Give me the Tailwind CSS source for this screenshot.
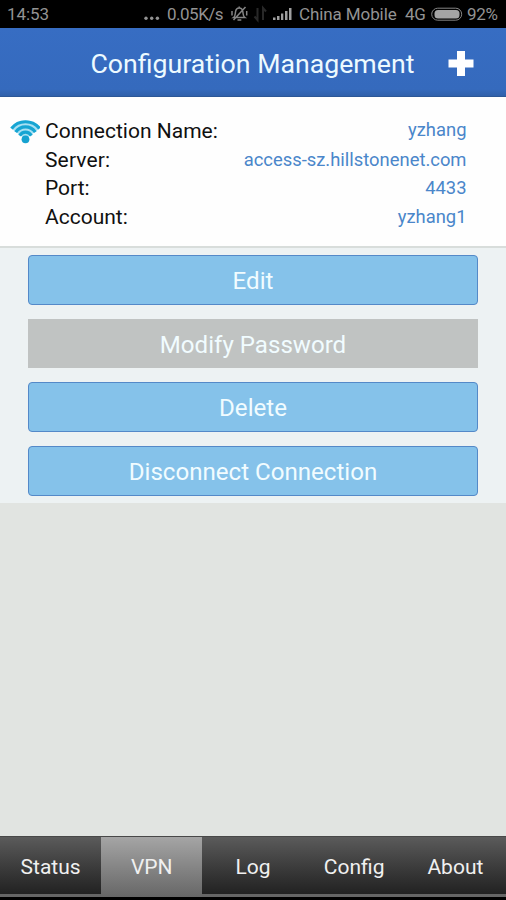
<!DOCTYPE html>
<html lang="en">
<head>
<meta charset="utf-8">
<title>Configuration Management</title>
<script src="https://cdn.jsdelivr.net/npm/@tailwindcss/browser@4"></script>
</head>
<body class="bg-black">
<div class="flex h-[900px] w-[506px] flex-col overflow-hidden bg-[#e1e4e1] font-['Roboto',sans-serif] whitespace-nowrap">
  <header class="flex h-7 shrink-0 items-center bg-black pl-[7px] text-[17px] leading-7 text-[#939393]">
    <span class="w-[137px] tracking-[-0.1px]">14:53</span>
    <svg class="w-[23px] shrink-0" height="28" viewBox="0 0 23 28" fill="#939393"><circle cx="2" cy="18.3" r="1.700"/><circle cx="7.700" cy="18.3" r="1.700"/><circle cx="13.400" cy="18.3" r="1.700"/></svg>
    <span class="w-[64px] tracking-[-0.500px]">0.05K/s</span>
    <svg class="w-[68px] shrink-0" height="28" viewBox="231 0 68 28" fill="none">
      <g stroke="#858585" stroke-width="1.500"><path d="M233.500 17.500c2-1.500 1.700-3.500 2-5.500.3-2.400 1.700-4 3.700-4s3.400 1.600 3.700 4c.3 2 0 4 2 5.500zM237.500 20h3.800M239.200 6.500v2M245.500 7L233.500 20M232 11v4.500M246.700 11v4.500"/></g>
      <path d="M257.500 8v12l-3-3.500M263 20V8l3 3.500" stroke="#282828" stroke-width="2"/>
      <path d="M273 17.500h2.500V20H273zM277 16h2.500v4H277zM281 13.500h2.300V20H281zM285 11h2.500v9H285zM289 8h2.500v12H289z" fill="#a0a0a0"/>
    </svg>
    <span class="w-[106px] tracking-[-0.1px]">China Mobile</span>
    <span class="w-[26px] tracking-[-0.400px]">4G</span>
    <svg class="w-[36px] shrink-0" height="28" viewBox="431 0 36 28"><rect x="431.700" y="8.200" width="30" height="12" rx="6" fill="none" stroke="#858585" stroke-width="1"/><rect x="434.500" y="10" width="25" height="8.500" rx="3.500" fill="#a4a4a4"/></svg>
    <span class="tracking-[-0.300px]">92%</span>
  </header>
  <div class="flex h-[69px] shrink-0 items-center border-b border-[#2c5796] bg-linear-to-b from-[#376dc3] via-[#356abd] via-90% to-[#3060aa] pt-[3px] pl-[90.500px] text-[26.700px] text-[#edfaff]">
    <h1 class="w-[357px] pt-0.5">Configuration Management</h1>
    <svg width="26" height="26" viewBox="0 0 26 26" fill="#fff"><path d="M9 0h8v8.500h8.500v8H17V25H9v-8.500H.500v-8H9z"/></svg>
  </div>
  <section class="flex h-[151px] shrink-0 border-b-2 border-[#d8dddb] bg-[#fefefe] pt-5 pl-[10px]">
    <svg class="mt-[2px] mr-[5px] shrink-0" width="30" height="25" viewBox="0 0 30 25" fill="none">
      <path d="M.5 9C8-1 23-1 30.500 9L15.500 20z" fill="#a9e0f2"/>
      <circle cx="15.500" cy="20.300" r="3.900" fill="#16a2d0"/>
      <g stroke-width="3.200" stroke="#16a5d3"><path d="M1.500 9.500C8.500.500 22.500.500 29.500 9.500"/><path d="M5.700 13.200C10.500 6.200 20.500 6.200 25.300 13.200"/><path d="M9.600 16.700C12.500 12 18.500 12 21.400 16.700"/></g>
    </svg>
    <dl class="grid w-[421.500px] grid-cols-[auto_1fr] auto-rows-[28.700px] text-[21px] leading-[28.700px] text-[#101010]">
      <dt>Connection Name:</dt><dd class="-mt-px text-right text-[18.400px] text-[#4a86ca]">yzhang</dd>
      <dt class="tracking-[0.150px]">Server:</dt><dd class="text-right text-[18.400px] text-[#4a86ca]">access-sz.hillstonenet.com</dd>
      <dt>Port:</dt><dd class="text-right text-[18.400px] text-[#4a86ca]">4433</dd>
      <dt>Account:</dt><dd class="text-right text-[18.400px] text-[#4a86ca]">yzhang1</dd>
    </dl>
  </section>
  <main class="flex h-[254.500px] shrink-0 flex-col bg-[#edf2f3] px-7 pt-[7px] text-[24.100px] text-[#f1fcff]">
    <button class="h-[50px] rounded-[4px] border-[1.500px] border-[#5489c8] bg-[#85c2ea] pt-[3px]">Edit</button>
    <button class="mt-[14px] mb-[14px] h-[49px] bg-[#c0c3c2] pt-1">Modify Password</button>
    <button class="mb-[13.500px] h-[50px] rounded-[4px] border-[1.500px] border-[#5489c8] bg-[#85c2ea] pt-0.5">Delete</button>
    <button class="h-[50px] rounded-[4px] border-[1.500px] border-[#5489c8] bg-[#85c2ea] pt-[3px]">Disconnect Connection</button>
  </main>
  <nav class="mt-auto grid h-[64px] shrink-0 grid-cols-5 border-t border-b-[3px] border-t-[#484848] border-b-black bg-[#666] text-center text-[21px] leading-[60px] text-[#f0f0f0]">
    <a class="h-[57px] bg-linear-to-b from-[#5b5b5b] to-[#222]">Status</a>
    <a class="h-[60px] bg-linear-to-b from-[#a5a5a5] to-[#676767]">VPN</a>
    <a class="h-[57px] bg-linear-to-b from-[#5b5b5b] to-[#222]">Log</a>
    <a class="h-[57px] bg-linear-to-b from-[#5b5b5b] to-[#222]">Config</a>
    <a class="h-[57px] bg-linear-to-b from-[#5b5b5b] to-[#222]">About</a>
  </nav>
</div>
</body>
</html>
